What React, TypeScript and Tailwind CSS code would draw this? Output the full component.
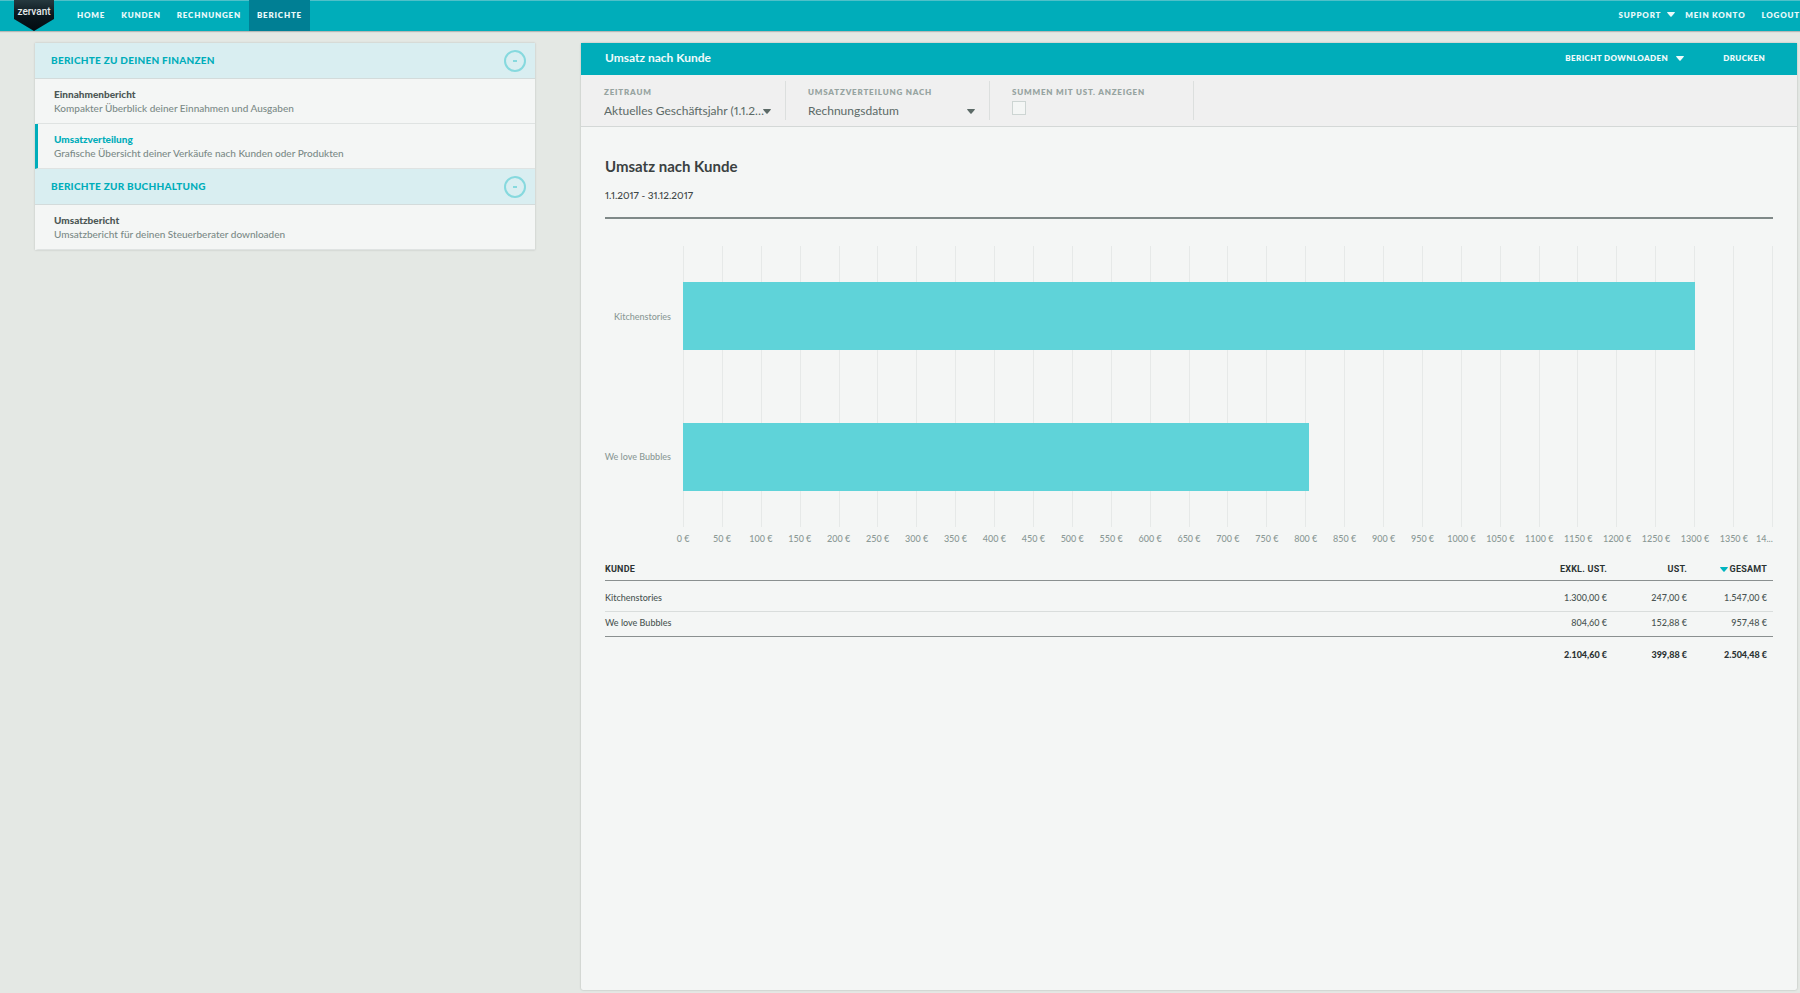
import React from "react";

const navItems = [
  { label: "HOME", active: false },
  { label: "KUNDEN", active: false },
  { label: "RECHNUNGEN", active: false },
  { label: "BERICHTE", active: true },
];

const sections = [
  {
    title: "BERICHTE ZU DEINEN FINANZEN",
    items: [
      {
        title: "Einnahmenbericht",
        text: "Kompakter Überblick deiner Einnahmen und Ausgaben",
        active: false,
      },
      {
        title: "Umsatzverteilung",
        text: "Grafische Übersicht deiner Verkäufe nach Kunden oder Produkten",
        active: true,
      },
    ],
  },
  {
    title: "BERICHTE ZUR BUCHHALTUNG",
    items: [
      {
        title: "Umsatzbericht",
        text: "Umsatzbericht für deinen Steuerberater downloaden",
        active: false,
      },
    ],
  },
];

const customers = [
  { name: "Kitchenstories", value: 1300, net: "1.300,00 €", tax: "247,00 €", total: "1.547,00 €" },
  { name: "We love Bubbles", value: 804.6, net: "804,60 €", tax: "152,88 €", total: "957,48 €" },
];

const axisMax = 1400;
const ticks = Array.from({ length: 29 }, (_, i) => i * 50);

function Caret({ className }: { className: string }) {
  return (
    <svg viewBox="0 0 8 5" aria-hidden="true" className={`h-[5px] w-2 shrink-0 fill-current ${className}`}>
      <path d="M0 0.6Q0 0 0.7 0H7.3Q8 0 8 0.6L4.6 4.6Q4 5 3.4 4.6Z" />
    </svg>
  );
}

function Logo() {
  return (
    <a href="#" aria-label="zervant" className="block h-[31px] w-10 tracking-normal">
      <svg viewBox="0 0 40 31" className="h-[31px] w-10">
        <defs>
          <linearGradient id="badge" x1="0" y1="0" x2="0" y2="1">
            <stop offset="0" stopColor="#26393f" />
            <stop offset="0.5" stopColor="#0a171d" />
            <stop offset="1" stopColor="#020b10" />
          </linearGradient>
        </defs>
        <path d="M0 0H40V19L20 31L0 19Z" fill="url(#badge)" />
        <text x="20" y="15" textAnchor="middle" fill="#e6eaea" fontFamily="Roboto, sans-serif" fontWeight="500" fontSize="10">
          zervant
        </text>
      </svg>
    </a>
  );
}

function TopBar() {
  return (
    <header className="flex h-[31px] items-stretch bg-[#00adba] pl-[14px] text-[8px] font-extrabold tracking-widest text-[#e9f9fa] shadow-[inset_0_1px_0_#4fc0c9,0_1px_1px_rgba(0,0,0,0.2)]">
      <Logo />
      <nav className="ml-[15px] flex">
        {navItems.map((item) => (
          <a
            key={item.label}
            href="#"
            className={`flex items-center px-2 pb-0.5 ${item.active ? "bg-[#007f94]" : ""}`}
          >
            {item.label}
          </a>
        ))}
      </nav>
      <div className="ml-auto flex items-center gap-4 pb-0.5">
        <button type="button" className="flex items-center gap-1.5">
          SUPPORT
          <Caret className="-mr-1.5" />
        </button>
        <a href="#">MEIN KONTO</a>
        <a href="#">LOGOUT</a>
      </div>
    </header>
  );
}

function Sidebar() {
  return (
    <aside className="self-start bg-[#f4f6f5] shadow-[0_0_2px_rgba(0,0,0,0.18)]">
      {sections.map((section) => (
        <section key={section.title}>
          <div className="flex h-9 items-center justify-between border-b border-[#d3dbdb] bg-[#d9eef1] pr-[9px] pl-4">
            <h2 className="text-[10px] font-black tracking-wide text-[#00adba]">{section.title}</h2>
            <button
              type="button"
              aria-label={`${section.title} einklappen`}
              className="flex size-[22px] items-center justify-center rounded-full border-2 border-[#86d9de] text-[#86d9de]"
            >
              <span className="h-0.5 w-1 bg-current" />
            </button>
          </div>
          {section.items.map((item) => (
            <a
              key={item.title}
              href="#"
              className={`flex h-[45px] flex-col justify-center border-b border-b-[#dfe3e2] border-l-3 pl-4 leading-[14px] ${
                item.active ? "border-l-[#00adba]" : "border-l-transparent"
              }`}
            >
              <span className={`text-[10px] font-black ${item.active ? "text-[#00adba]" : "text-[#4d5856]"}`}>
                {item.title}
              </span>
              <span className="text-[10px] font-medium text-[#7b8a87]">{item.text}</span>
            </a>
          ))}
        </section>
      ))}
    </aside>
  );
}

function SelectField({ id, label, value }: { id: string; label: string; value: string }) {
  return (
    <div className="flex w-[204px] flex-col border-r border-[#dcdfde] pr-3.5 pl-[22px]">
      <label htmlFor={id} className="pt-1 text-[8px] leading-[14px] font-extrabold tracking-widest text-[#97a4a1]">
        {label}
      </label>
      <div className="relative flex items-center pr-1.5">
        <select
          id={id}
          className="h-6 w-full appearance-none overflow-hidden bg-transparent text-[12px] text-ellipsis whitespace-nowrap text-[#5c6a67] proportional-nums"
        >
          <option>{value}</option>
        </select>
        <Caret className="pointer-events-none absolute right-0 text-[#5c6a67]" />
      </div>
    </div>
  );
}

function Filters() {
  return (
    <div className="flex h-[52px] border-b border-[#d4d8d7] bg-[#f0f0f0] py-1.5 pl-px">
      <SelectField id="zeitraum" label="ZEITRAUM" value="Aktuelles Geschäftsjahr (1.1.2017 - 31.12.2017)" />
      <SelectField id="verteilung" label="UMSATZVERTEILUNG NACH" value="Rechnungsdatum" />
      <div className="flex w-[204px] flex-col items-start border-r border-[#dcdfde] pl-[22px]">
        <label
          htmlFor="ust"
          className="pt-1 text-[8px] leading-[14px] font-extrabold tracking-widest whitespace-nowrap text-[#97a4a1]"
        >
          SUMMEN MIT UST. ANZEIGEN
        </label>
        <input
          id="ust"
          type="checkbox"
          className="mt-0.5 size-[14px] appearance-none border border-[#cdd5d3] bg-[#f4f6f5] checked:bg-[#00adba]"
        />
      </div>
    </div>
  );
}

function Chart() {
  return (
    <figure className="mt-[27px] text-[9px] font-medium text-[#8b9996]">
      <div className="flex h-[281px]">
        <div className="flex w-[78px] shrink-0 flex-col pr-3 text-right whitespace-nowrap">
          {customers.map((c) => (
            <span key={c.name} className="flex flex-1 items-center justify-end">
              {c.name}
            </span>
          ))}
        </div>
        <div className="relative flex flex-1 flex-col">
          <div className="absolute inset-0 flex justify-between">
            {ticks.map((t) => (
              <span key={t} className="w-px bg-[#e6e9e8]" />
            ))}
          </div>
          {customers.map((c) => (
            <div key={c.name} className="relative flex flex-1 items-center">
              <div className="h-[68px] bg-[#5fd3d9]" style={{ width: `${(c.value / axisMax) * 100}%` }} />
            </div>
          ))}
        </div>
      </div>
      <div className="ml-[78px] flex justify-between pt-1 leading-4">
        {ticks.map((t) => (
          <span
            key={t}
            className={`flex w-0 whitespace-nowrap ${t === axisMax ? "justify-end" : "justify-center"}`}
          >
            {t === axisMax ? "14..." : `${t} €`}
          </span>
        ))}
      </div>
    </figure>
  );
}

function CustomerTable() {
  return (
    <table className="mt-4 w-full border-collapse text-right text-[9px] font-medium text-[#4a5553]">
      <thead className="font-['Roboto',sans-serif] tracking-wide text-[#2c3333]">
        <tr className="h-[17px] border-b border-[#8a9090] align-top">
          <th className="text-left font-bold">KUNDE</th>
          <th className="w-[120px] pr-1.5 font-bold">EXKL. UST.</th>
          <th className="w-20 pr-1.5 font-bold">UST.</th>
          <th className="w-20 pr-1.5 font-bold" aria-sort="descending">
            <button type="button" className="inline-flex items-center gap-0.5 align-top tracking-wide">
              <Caret className="text-[#00b5c1]" />
              GESAMT
            </button>
          </th>
        </tr>
      </thead>
      <tbody>
        {customers.map((c, i) => (
          <tr
            key={c.name}
            className={i === 0 ? "h-[31px] border-b border-[#d9dddc]" : "h-[25px] border-b border-[#8a9090]"}
          >
            <td className={`text-left ${i === 0 ? "pt-1" : "pb-0.5"}`}>{c.name}</td>
            <td className={`pr-1.5 ${i === 0 ? "pt-1" : "pb-0.5"}`}>{c.net}</td>
            <td className={`pr-1.5 ${i === 0 ? "pt-1" : "pb-0.5"}`}>{c.tax}</td>
            <td className={`pr-1.5 ${i === 0 ? "pt-1" : "pb-0.5"}`}>{c.total}</td>
          </tr>
        ))}
      </tbody>
      <tfoot>
        <tr className="h-9 font-black text-[#2c3333]">
          <td />
          <td className="pr-1.5">2.104,60 €</td>
          <td className="pr-1.5">399,88 €</td>
          <td className="pr-1.5">2.504,48 €</td>
        </tr>
      </tfoot>
    </table>
  );
}

export default function App() {
  return (
    <div className="flex min-h-screen flex-col bg-[#e4e8e4] font-['Lato',sans-serif]">
      <TopBar />
      <div className="grid flex-1 grid-cols-[minmax(0,500fr)_minmax(0,1216fr)] gap-[46px] pt-3 pr-[3px] pb-[3px] pl-[35px]">
        <Sidebar />
        <main className="rounded-[2px] bg-[#f4f6f5] shadow-[0_0_2px_rgba(0,0,0,0.25)]">
          <div className="flex h-8 items-center justify-between bg-[#00adba] pr-8 pb-0.5 pl-6 text-[#effafb]">
            <h2 className="text-[12px] font-bold">Umsatz nach Kunde</h2>
            <div className="flex items-center gap-[39px] text-[8px] font-extrabold tracking-wider">
              <button type="button" className="flex items-center gap-2">
                BERICHT DOWNLOADEN
                <Caret className="" />
              </button>
              <button type="button">DRUCKEN</button>
            </div>
          </div>
          <Filters />
          <div className="px-6">
            <h1 className="pt-[27px] text-[15px] leading-6 font-bold text-[#3a4141]">Umsatz nach Kunde</h1>
            <p className="mt-[9px] border-b-2 border-[#7f8988] pb-3.5 text-[10px] leading-4 font-medium text-[#3f4847] proportional-nums">
              1.1.2017 - 31.12.2017
            </p>
            <Chart />
            <CustomerTable />
          </div>
        </main>
      </div>
    </div>
  );
}
